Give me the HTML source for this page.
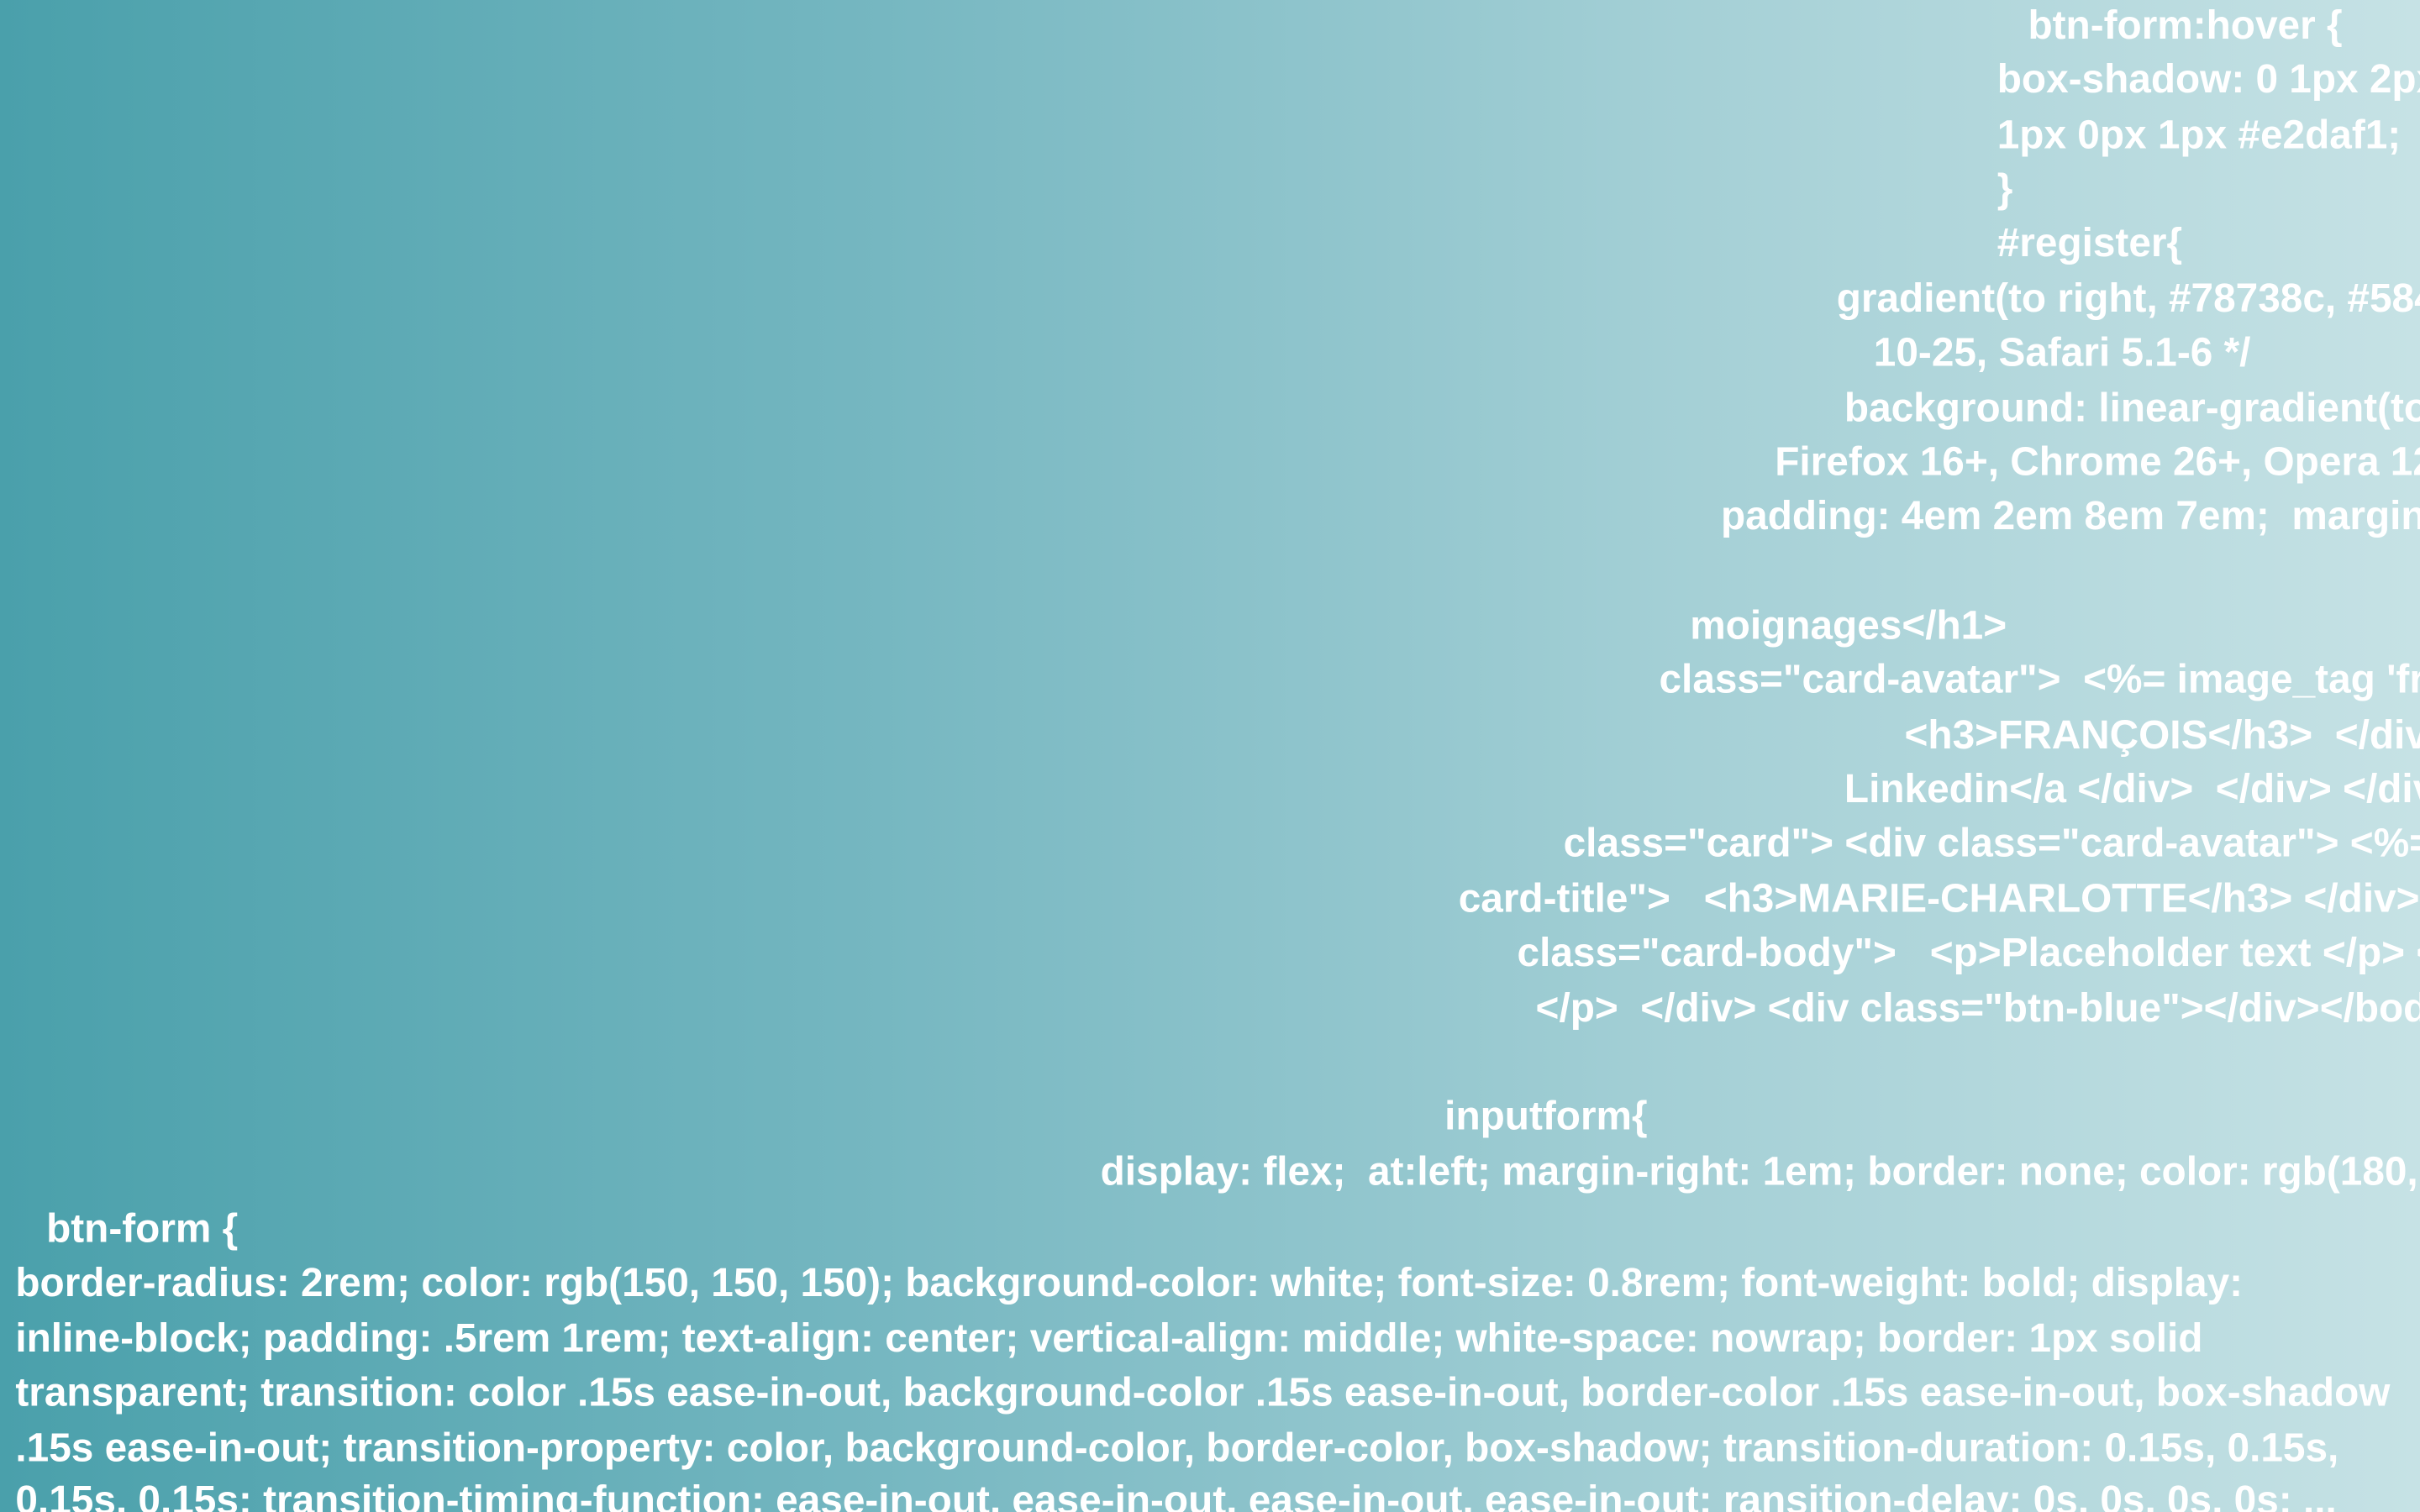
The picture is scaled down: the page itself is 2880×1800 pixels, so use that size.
<!DOCTYPE html>
<html><head><meta charset="utf-8">
<style>
html,body{margin:0;padding:0;width:2880px;height:1800px;overflow:hidden}
body{background:linear-gradient(to right,#4aa0ab 0%,#74b6c0 35%,#a5d0d6 70%,#c6e2e5 100%)}
#s{position:absolute;left:0;top:0;width:1568px;height:980px;overflow:hidden;transform:scale(1.836735);transform-origin:0 0}
#s div{position:absolute;white-space:pre;color:#fff;font-family:"Liberation Sans",Arial,sans-serif;font-weight:bold;font-size:26px;line-height:26px}
</style></head><body><div id="s">
<div style="left:1314px;top:3px">btn-form:hover {</div>
<div style="left:1294px;top:38px">box-shadow: 0 1px 2px rgba</div>
<div style="left:1294px;top:74px">1px 0px 1px #e2daf1;</div>
<div style="left:1294px;top:109px">}</div>
<div style="left:1294px;top:144px">#register{</div>
<div style="left:1190px;top:180px">gradient(to right, #78738c, #584d7f</div>
<div style="left:1214px;top:215px">10-25, Safari 5.1-6 */</div>
<div style="left:1195px;top:251px">background: linear-gradient(to right</div>
<div style="left:1150px;top:286px">Firefox 16+, Chrome 26+, Opera 12+</div>
<div style="left:1115px;top:321px">padding: 4em 2em 8em 7em;  margin: 0</div>
<div style="left:1095px;top:392px">moignages&lt;/h1&gt;</div>
<div style="left:1075px;top:427px">class="card-avatar"&gt;  &lt;%= image_tag 'francois</div>
<div style="left:1234px;top:463px">&lt;h3&gt;FRANÇOIS&lt;/h3&gt;  &lt;/div&gt;</div>
<div style="left:1195px;top:498px">Linkedin&lt;/a &lt;/div&gt;  &lt;/div&gt; &lt;/div&gt;</div>
<div style="left:1013px;top:533px">class="card"&gt; &lt;div class="card-avatar"&gt; &lt;%= image</div>
<div style="left:945px;top:569px">card-title"&gt;   &lt;h3&gt;MARIE-CHARLOTTE&lt;/h3&gt; &lt;/div&gt; &lt;div</div>
<div style="left:983px;top:604px">class="card-body"&gt;   &lt;p&gt;Placeholder text &lt;/p&gt; &lt;p&gt;</div>
<div style="left:995px;top:640px">&lt;/p&gt;  &lt;/div&gt; &lt;div class="btn-blue"&gt;&lt;/div&gt;&lt;/body&gt;</div>
<div style="left:936px;top:710px">inputform{</div>
<div style="left:713px;top:746px">display: flex;  at:left; margin-right: 1em; border: none; color: rgb(180, 180, 180);</div>
<div style="left:30px;top:783px">btn-form {</div>
<div style="left:10px;top:818px">border-radius: 2rem; color: rgb(150, 150, 150); background-color: white; font-size: 0.8rem; font-weight: bold; display:</div>
<div style="left:10px;top:854px">inline-block; padding: .5rem 1rem; text-align: center; vertical-align: middle; white-space: nowrap; border: 1px solid</div>
<div style="left:10px;top:889px">transparent; transition: color .15s ease-in-out, background-color .15s ease-in-out, border-color .15s ease-in-out, box-shadow</div>
<div style="left:10px;top:925px">.15s ease-in-out; transition-property: color, background-color, border-color, box-shadow; transition-duration: 0.15s, 0.15s,</div>
<div style="left:10px;top:959px">0.15s, 0.15s; transition-timing-function: ease-in-out, ease-in-out, ease-in-out, ease-in-out; ransition-delay: 0s, 0s, 0s, 0s; ...</div>
</div></body></html>
